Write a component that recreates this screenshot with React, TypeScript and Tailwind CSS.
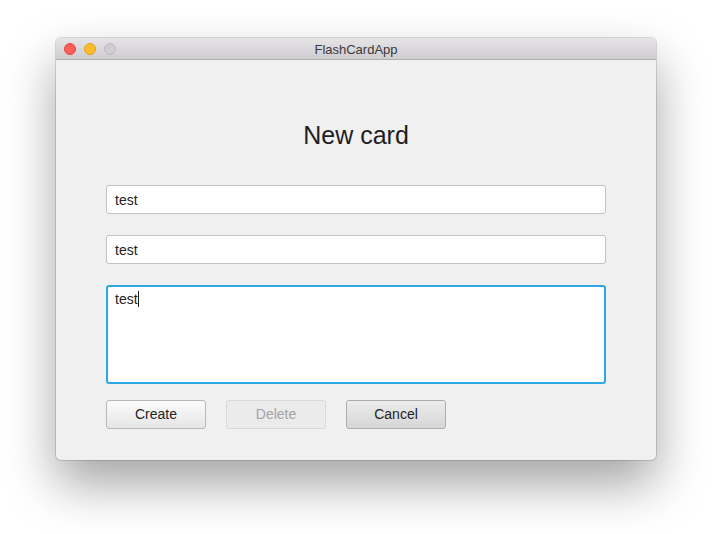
import React from "react";

export default function App() {
  const font = { fontFamily: '"Liberation Sans", Arial, sans-serif' };
  return (
    <div className="w-[712px] h-[534px] bg-white overflow-hidden pl-[56px] pt-[38px]" style={font}>
      <div className="w-[600px] h-[422px] rounded-[5px] bg-[#f0f0f0] shadow-[0_24px_50px_rgba(0,0,0,0.36),0_0_0_1px_rgba(0,0,0,0.13)] flex flex-col overflow-hidden">
        <div className="relative h-[22px] shrink-0 bg-gradient-to-b from-[#e6e4e6] to-[#cfcdcf] border-b border-[#b0b0b0] flex items-center justify-center pt-[2px]">
          <div className="absolute left-[8px] top-[5px] flex gap-[8px]">
            <div className="w-[12px] h-[12px] rounded-full bg-[#fc5f57] border border-[#e2463f]" />
            <div className="w-[12px] h-[12px] rounded-full bg-[#fdbc2e] border border-[#e1a116]" />
            <div className="w-[12px] h-[12px] rounded-full bg-[#cfcdcf] border border-[#bbb9bb]" />
          </div>
          <span className="text-[13px] text-[#3a3a3a] leading-none">FlashCardApp</span>
        </div>
        <div className="flex-1 flex flex-col px-[50px] pt-[59px]">
          <div className="h-[32px] text-center text-[25px] leading-[32px] text-[#1e1e1e]">New card</div>
          <div className="mt-[34px] h-[29px] bg-white border border-[#c2c2c2] rounded-[3px] flex items-center px-[8px] pt-[1px] text-[14px] text-[#222]">test</div>
          <div className="mt-[21px] h-[29px] bg-white border border-[#c2c2c2] rounded-[3px] flex items-center px-[8px] pt-[1px] text-[14px] text-[#222]">test</div>
          <div className="mt-[21px] h-[99px] bg-white border-2 border-[#2ea8e0] rounded-[3px] px-[7px] pt-[3px] text-[14px] text-[#222] flex items-start">
            <span className="leading-[18px]">test</span>
            <span className="mt-[1px] w-[1px] h-[16px] bg-[#222]" />
          </div>
          <div className="mt-[16px] flex gap-[20px]">
            <div className="w-[100px] h-[29px] rounded-[3px] border border-[#b8b8b8] bg-gradient-to-b from-[#fbfbfb] to-[#e6e6e6] flex items-center justify-center text-[14px] text-[#222]">Create</div>
            <div className="w-[100px] h-[29px] rounded-[3px] border border-[#d9d9d9] bg-[#ebebeb] flex items-center justify-center text-[14px] text-[#a3a3a3]">Delete</div>
            <div className="w-[100px] h-[29px] rounded-[3px] border border-[#adadad] bg-gradient-to-b from-[#ececec] to-[#d6d6d6] flex items-center justify-center text-[14px] text-[#222]">Cancel</div>
          </div>
        </div>
      </div>
    </div>
  );
}
